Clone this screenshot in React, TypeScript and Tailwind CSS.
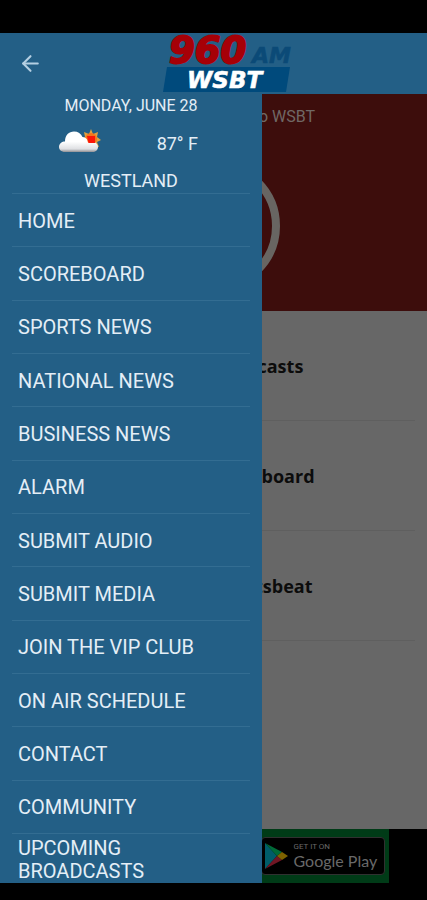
import { ArrowLeft } from "lucide-react";

const menu = [
  "Home",
  "Scoreboard",
  "Sports News",
  "National News",
  "Business News",
  "Alarm",
  "Submit Audio",
  "Submit Media",
  "Join the VIP Club",
  "On Air Schedule",
  "Contact",
  "Community",
];

const sections = ["Podcasts", "Scoreboard", "Sportsbeat"];

function Logo() {
  return (
    <svg
      viewBox="0 0 130 60"
      role="img"
      aria-label="960 AM WSBT"
      className="absolute top-0 left-1/2 w-[130px] h-[60px] -translate-x-[52px] overflow-visible"
      fontFamily="'DejaVu Sans'"
      fontWeight="bold"
      fontStyle="italic"
    >
      <path d="M5 34H128L124 59H1Z" fill="#004a7c" />
      <text x="7" y="30" fontSize="37" fill="#a60007" stroke="#a60007" strokeWidth="2" strokeLinejoin="round">
        960
      </text>
      <text x="90" y="30" fontSize="22" fill="#0b4a77" stroke="#0b4a77" strokeWidth="0.6">
        AM
      </text>
      <text x="25" y="55" fontSize="23" fill="#ffffff" stroke="#ffffff" strokeWidth="0.6">
        WSBT
      </text>
    </svg>
  );
}

function WeatherIcon() {
  return (
    <svg viewBox="0 0 42 26" className="w-[42px] h-[26px] overflow-visible" aria-hidden="true">
      <defs>
        <linearGradient id="cloud" x1="0" y1="0" x2="0" y2="1">
          <stop offset="0.5" stopColor="#ffffff" />
          <stop offset="0.85" stopColor="#dfe0e3" />
          <stop offset="1" stopColor="#8f8f93" />
        </linearGradient>
      </defs>
      <path
        d="M32 -2l2 5 5-2-1 5 4 3-4 2 2 5-5-1-3 4-3-4-5 1 2-5-4-2 4-3-1-5 5 2z"
        fill="#e0a040"
      />
      <circle cx="32" cy="8" r="6" fill="#f5751c" />
      <path
        d="M6 21C2 21 0 18.500 0 16 0 12.500 3 10.500 6 10.500 6 4 10 0.500 15 0.500c4 0 7 2 8.500 5.500 2 0 3.500 1 4.500 2.500l1 3h7c2 1 3 2.500 3 4.500 0 2.500-2 5-5 5z"
        fill="url(#cloud)"
      />
      <path d="M28 5h8v7h-6.500z" fill="#fb1608" />
    </svg>
  );
}

function Drawer() {
  return (
    <aside className="[grid-area:1/1] z-10 flex w-[262px] flex-col bg-[#235f86] text-[#e4eef6]">
      <div className="flex h-[99px] flex-col items-center">
        <p className="text-base leading-[24px]">MONDAY, JUNE 28</p>
        <div className="flex h-[52px] w-full items-center justify-between pr-16 pl-[59px]">
          <WeatherIcon />
          <span className="text-lg">87° F</span>
        </div>
        <p className="text-lg leading-[24px]">WESTLAND</p>
      </div>
      <nav className="flex flex-1 flex-col px-3 text-[20px] leading-[23px] uppercase">
        {menu.map((item) => (
          <a key={item} href="#" className="flex flex-1 items-center border-t border-[#336d92] px-1.5 pt-0.5">
            {item}
          </a>
        ))}
        <a href="#" className="flex h-[50px] items-center border-t border-[#336d92] px-1.5 pt-1">
          <span className="w-40">Upcoming Broadcasts</span>
        </a>
      </nav>
    </aside>
  );
}

function StoreBanner() {
  return (
    <div className="flex h-[54px] justify-center bg-black">
      <div className="flex w-[350px] items-center justify-end bg-[#003b17] pr-1">
        <a
          href="#"
          className="flex h-[38px] w-[124px] items-center gap-1.5 rounded border border-[#303030] bg-black pl-0.5 text-[#696969]"
        >
          <svg viewBox="0 0 24 26" className="h-[26px] w-6 shrink-0" aria-hidden="true">
            <path d="M1 0v26l12-13z" fill="#005c69" />
            <path d="M1 0l17 9-5 4z" fill="#006b38" />
            <path d="M1 26l17-9-5-4z" fill="#701624" />
            <path d="M18 9l6 4-6 4-5-4z" fill="#7d6200" />
          </svg>
          <span className="flex flex-col">
            <span className="text-[8px] leading-[10px]">GET IT ON</span>
            <span className="font-[Lato] text-base leading-[18px] whitespace-nowrap">Google Play</span>
          </span>
        </a>
      </div>
    </div>
  );
}

function Station() {
  return (
    <main className="[grid-area:1/1] flex flex-col bg-[#676767]">
      <section className="flex h-[217px] flex-col items-center bg-[#3d0d0c] pt-3">
        <p className="w-[203px] text-right text-base leading-[22px] text-[#706865]">Listen to WSBT</p>
        <div className="mt-8 size-[132px] rounded-full border-8 border-[#686562]" />
      </section>
      <ul className="pr-3 pl-[112px]">
        {sections.map((s) => (
          <li
            key={s}
            className="flex h-[110px] items-center justify-center border-b border-[#5f5f5f] font-[Open_Sans] text-lg font-bold text-[#0c0c0c]"
          >
            {s}
          </li>
        ))}
      </ul>
      <div className="flex-1" />
      <StoreBanner />
    </main>
  );
}

export default function App() {
  return (
    <div className="flex min-h-screen flex-col bg-black pt-[33px] pb-[17px] font-[Roboto,sans-serif]">
      <header className="relative z-20 flex h-[61px] items-center bg-[#235f86] px-[18px]">
        <button type="button" aria-label="Back" className="text-[#b4cfe2]">
          <ArrowLeft size={25} strokeWidth={2} />
        </button>
        <Logo />
      </header>
      <div className="grid flex-1">
        <Drawer />
        <Station />
      </div>
    </div>
  );
}
